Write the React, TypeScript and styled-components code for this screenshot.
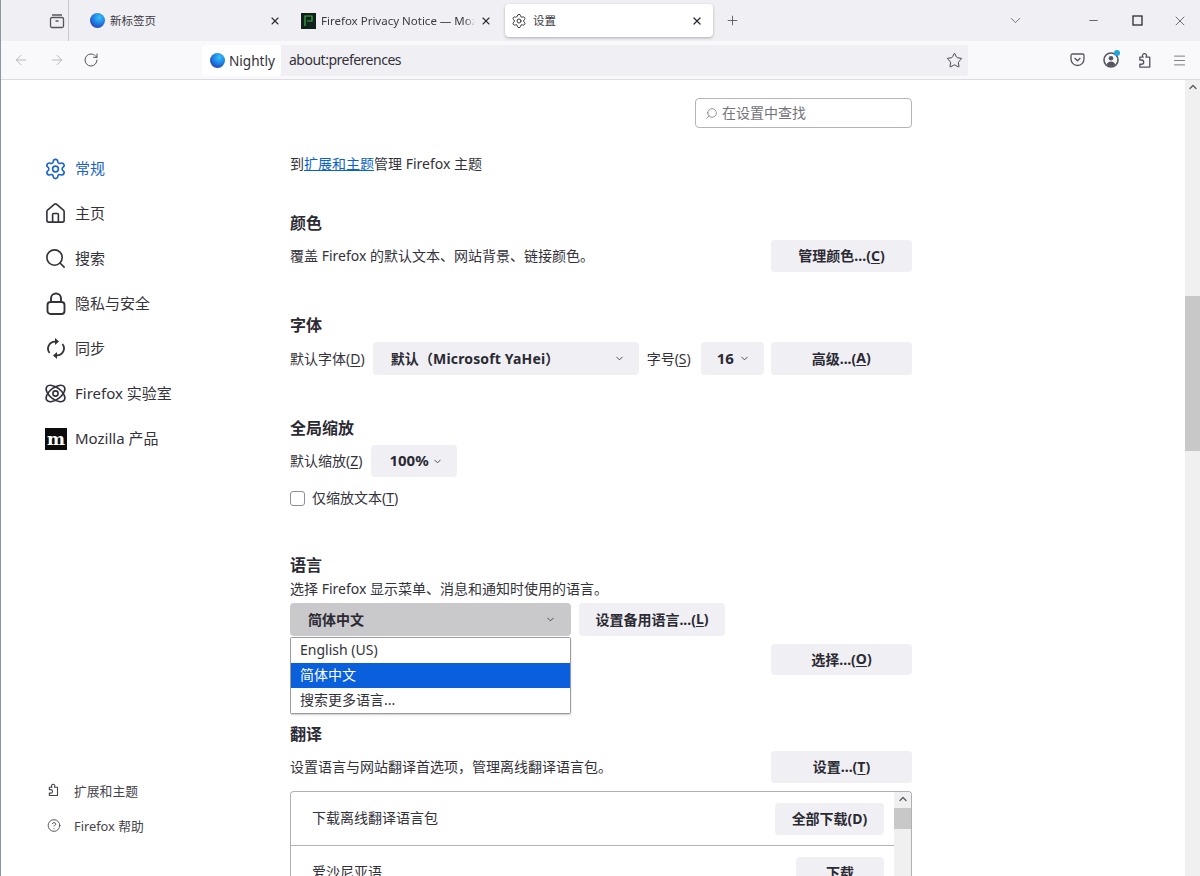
import React from "react";
import styled, { createGlobalStyle } from "styled-components";
import { ArrowLeft, ArrowRight, ChevronDown, ChevronUp, CircleHelp, House, Minus, Plus, RotateCw, Search, Settings, Star, X, Menu as MenuIcon } from "lucide-react";

const FONT = `"Noto Sans", "Noto Sans CJK SC", sans-serif`;

const Global = createGlobalStyle`
  html, body { margin: 0; padding: 0; height: 100%; overflow: hidden; background: #fff; }
  body { font-family: ${FONT}; color: #2b2a33; font-size: 14px; }
  * { box-sizing: border-box; }
`;

const Win = styled.div`
  width: 1200px; height: 876px; display: flex; flex-direction: column; overflow: hidden;
  border-left: 1px solid #8f95a3; background: #fff;
`;
const TabBar = styled.div`
  height: 41px; flex: none; background: #f0f0f4; display: flex; align-items: center; padding-left: 45px;
`;
const ViewBtn = styled.div`
  width: 22px; height: 41px; display: flex; align-items: center; justify-content: center; color: #55555e; flex: none;
`;
const Sep = styled.div`width: 1px; height: 41px; background: #c9c9d0; margin: 0 2px 0 0; flex: none;`;
const Tab = styled.div<{ $w: number; $active?: boolean; $gap: number; $ml?: number }>`
  width: ${p => p.$w}px; height: 33px; flex: none; display: flex; align-items: center; gap: ${p => p.$gap}px;
  margin-left: ${p => p.$ml ?? 0}px; padding: 0 10px 0 ${p => (p.$active ? 6 : 10)}px; font-size: 11.5px; color: #3a3942;
  border-radius: 4px; background: ${p => (p.$active ? "#fff" : "transparent")};
  box-shadow: ${p => (p.$active ? "0 1px 3px rgba(0,0,0,.28)" : "none")};
`;
const TabTitle = styled.span<{ $fade?: boolean }>`
  flex: 1; min-width: 0; white-space: nowrap; overflow: hidden; line-height: 16px;
  ${p => (p.$fade ? "mask-image: linear-gradient(to left, transparent 0, #000 10px);" : "")}
`;
const Close = styled(X)`flex: none; color: #2b2a33;`;
const Globe = styled.span<{ $size: number; $ml?: number }>`
  width: ${p => p.$size}px; height: ${p => p.$size}px; border-radius: 50%; flex: none; margin-left: ${p => p.$ml ?? 0}px;
  background: radial-gradient(circle at 62% 30%, #35c4f5 0, #1f7fe4 45%, #2b3fb0 80%, #2a2a90 100%);
`;
const TermIcon = styled.span`
  width: 15px; height: 16px; background: #10201a; flex: none; display: flex; align-items: center; justify-content: center;
`;
const NewTab = styled.div`width: 20px; margin-left: 9px; display: flex; justify-content: center; color: #55555e;`;
const Spacer = styled.div`flex: 1;`;
const TabList = styled.div`width: 20px; margin-right: 57px; display: flex; justify-content: center; color: #55555e;`;
const WinRow = styled.div`display: flex; align-items: center; padding-right: 9px;`;
const WinCtl = styled.div<{ $mr: number }>`width: 22px; margin-right: ${p => p.$mr}px; display: flex; justify-content: center; color: #2b2a33;`;

const ToolBar = styled.div`
  height: 39px; flex: none; background: #f9f9fb; border-bottom: 1px solid #dcdce0; display: flex; align-items: center;
`;
const NavBtn = styled.div<{ $w: number; $c: string }>`
  width: ${p => p.$w}px; flex: none; display: flex; justify-content: center; color: ${p => p.$c};
`;
const UrlBar = styled.div`
  width: 766px; height: 31px; flex: none; margin-left: 93px; background: #f0f0f4; border-radius: 2px; display: flex; align-items: center; color: #33323a;
`;
const Identity = styled.div`
  width: 79px; height: 31px; background: #fff; display: flex; align-items: center; gap: 4px; padding-left: 8px; border-radius: 3px; font-size: 13.6px; flex: none;
`;
const UrlText = styled.span`margin-left: 8px; flex: 1; font-size: 14px; line-height: 20px; letter-spacing: -0.5px; padding-bottom: 1px;`;
const StarBtn = styled(Star)`margin-right: 5px; color: #44434b;`;
const ToolIcons = styled.div`display: flex; flex: 1; padding-left: 99px; gap: 14px; color: #55555e; align-items: center;`;
const ToolIcon = styled.div`width: 20px; height: 20px; display: flex; justify-content: center; align-items: center; position: relative;`;
const Dot = styled.span`position: absolute; width: 6px; height: 6px; border-radius: 50%; background: #1fa6dc; top: 0; right: 1px;`;

const Body = styled.div`flex: 1; min-height: 0; display: flex; overflow: hidden;`;
const Side = styled.nav`
  width: 289px; flex: none; display: flex; flex-direction: column; padding: 66px 0 41px 43px;
`;
const NavItem = styled.div<{ $active?: boolean }>`
  height: 45px; display: flex; align-items: center; gap: 8px; font-size: 15px; white-space: nowrap;
  color: ${p => (p.$active ? "#1b63c9" : "#33323a")};
`;
const NavLabel = styled.span`padding-bottom: 2px;`;
const NavIcon = styled.span`width: 23px; height: 23px; display: flex; align-items: center; justify-content: center; flex: none;`;
const Mark = styled.span`
  width: 22px; height: 22px; background: #0c0c0d; color: #fff; display: flex; align-items: center; justify-content: center;
  font: 700 17px/20px "DejaVu Serif", serif; letter-spacing: -1px;
`;
const SideBottom = styled.div`margin-top: auto; display: flex; flex-direction: column; gap: 15px;`;
const FootItem = styled.div`
  height: 20px; display: flex; align-items: center; gap: 13px; padding-left: 3px; font-size: 12.8px; color: #44434b; white-space: nowrap;
`;
const FootIcon = styled.span`width: 14px; height: 16px; display: flex; align-items: center; justify-content: center; flex: none;`;

const Main = styled.main`width: 622px; flex: none; padding-top: 18px; overflow: hidden; height: 796px;`;
const SearchRow = styled.div`display: flex; justify-content: flex-end;`;
const SearchBox = styled.div`
  width: 217px; height: 30px; border: 1px solid #b4b4ba; border-radius: 4px; display: flex; align-items: center; gap: 4px;
  padding: 0 0 2px 9px; color: #74737a; font-size: 14px;
`;
const MirrorSearch = styled(Search)`transform: scaleX(-1); margin-top: 2px;`;
const Text = styled.div<{ $top?: number }>`
  margin-top: ${p => p.$top ?? 0}px; line-height: 20px; height: 20px; font-size: 14px; white-space: nowrap; color: #33323a;
`;
const Link = styled.span`color: #0a62c9; text-decoration: underline;`;
const Heading = styled.h2<{ $top: number }>`
  margin: ${p => p.$top}px 0 0; height: 22px; line-height: 22px; font-size: 16px; font-weight: 700; color: #2b2a33;
`;
const Row = styled.div<{ $top: number; $h?: number; $gap?: number; $between?: boolean }>`
  margin-top: ${p => p.$top}px; height: ${p => p.$h ?? 32}px; display: flex; align-items: stretch;
  gap: ${p => p.$gap ?? 0}px; justify-content: ${p => (p.$between ? "space-between" : "flex-start")};
`;
const Label = styled.span<{ $ml?: number }>`
  align-self: center; font-size: 14px; color: #33323a; white-space: nowrap; padding-bottom: 2px; margin-left: ${p => p.$ml ?? 0}px;
`;
const Btn = styled.div<{ $w: number; $h?: number; $ml?: number }>`
  width: ${p => p.$w}px; height: ${p => (p.$h ? `${p.$h}px` : "auto")}; flex: none; background: #f0f0f4; border-radius: 4px; display: flex; align-items: center; justify-content: center;
  font-size: 14px; font-weight: 700; color: #2b2a33; white-space: nowrap; padding-bottom: 2px; margin-left: ${p => p.$ml ?? 0}px;
`;
const SelectBtn = styled.div<{ $w: number; $open?: boolean; $pl: number; $pr: number; $ml?: number; $fs?: number; $ls?: number }>`
  position: relative; width: ${p => p.$w}px; flex: none; border-radius: 4px; display: flex; align-items: center; justify-content: space-between;
  padding: 0 ${p => p.$pr}px 2px ${p => p.$pl}px; background: ${p => (p.$open ? "#c9c9cb" : "#f0f0f4")}; margin-left: ${p => p.$ml ?? 0}px;
  font-size: ${p => p.$fs ?? 14}px; letter-spacing: ${p => p.$ls ?? 0}px; font-weight: 700; color: #2b2a33; white-space: nowrap;
`;
const ChevBox = styled.span`display: flex; margin-top: 2px;`;
const Menu = styled.div`
  position: absolute; left: 0; top: 34px; width: 100%; background: #fff; border: 1px solid #9a9a9f; border-radius: 2px;
  box-shadow: 0 1px 2px rgba(0,0,0,.2); z-index: 5; font-weight: 400;
`;
const Option = styled.div<{ $sel?: boolean }>`
  height: 25px; line-height: 23px; padding-left: 9px; font-size: 14px;
  background: ${p => (p.$sel ? "#0a5fdc" : "#fff")}; color: ${p => (p.$sel ? "#fff" : "#33323a")};
`;
const Check = styled.span`width: 15px; height: 15px; border: 1px solid #8f8f9d; border-radius: 3px; flex: none; align-self: center;`;
const U = styled.span`text-decoration: underline; text-underline-offset: 2px;`;

const Table = styled.div`
  margin-top: 8px; height: 110px; border: 1px solid #b0b0b4; border-radius: 4px 4px 0 0; border-bottom: 0; display: flex; overflow: hidden;
`;
const TableList = styled.div`flex: 1; min-width: 0;`;
const TableRow = styled.div<{ $line?: boolean }>`
  height: 54px; flex: none; display: flex; justify-content: space-between; align-items: flex-start; padding: 11px 10px 0 21px;
  ${p => (p.$line ? "border-bottom: 1px solid #b4b4b8;" : "")}
`;
const RowText = styled.span`margin-top: 5px; font-size: 14px; color: #33323a; line-height: 20px;`;
const Track = styled.div`
  width: 17px; flex: none; background: #f0f0f0; display: flex; flex-direction: column; align-items: center; color: #55555e; padding-top: 1px;
`;
const InnerThumb = styled.div`width: 100%; height: 21px; margin-top: 3px; background: #c8c8c8;`;
const PageBar = styled.div`
  margin-left: 273px; width: 15px; flex: none; background: #f0f0f0; display: flex; flex-direction: column; align-items: center; color: #55555e;
`;
const PageArrow = styled(ChevronUp)`margin-top: 1px; flex: none;`;
const PageThumb = styled.div`width: 15px; height: 155px; margin-top: 203px; background: #c8c8c8; flex: none;`;

const Chev = () => <ChevBox><ChevronDown size={11} strokeWidth={2} color="#3f3f47" /></ChevBox>;

const Puzzle = ({ size = 18 }: { size?: number }) => (
  <svg width={size} height={size} viewBox="0 0 18 18" fill="none" stroke="currentColor" strokeWidth="1.4" strokeLinejoin="round">
    <path d="M3 8.5V5.5h3.4c-.8-1-.9-2.2-.2-3C7 1.5 8.6 1.4 9.5 2.3c.9.9.8 2.200 0 3.200h4V16H3v-3h1.700c1.500 0 2.400-.7 2.400-2.200S6.200 8.500 4.700 8.500z" />
  </svg>
);
const Lock = () => (
  <svg width="20" height="24" viewBox="0 0 20 24" fill="none" stroke="currentColor" strokeWidth="1.9">
    <rect x="1.500" y="10" width="17" height="12" rx="3" />
    <path d="M5 10V6.500a5 5 0 0 1 10 0V10" />
  </svg>
);
const Sync = () => (
  <svg width="20" height="23" viewBox="0 0 20 23" fill="none" stroke="currentColor" strokeWidth="1.8">
    <path d="M3.600 16A7 7 0 0 1 9 4.600" />
    <path d="M16.400 7A7 7 0 0 1 11 18.400" />
    <path d="M9 1l4 3.500L9 8z" fill="currentColor" stroke="none" />
    <path d="M11 15l-4 3.500 4 3.500z" fill="currentColor" stroke="none" />
  </svg>
);
const Lab = () => (
  <svg width="23" height="23" viewBox="0 0 23 23" fill="none" stroke="currentColor" strokeWidth="1.6">
    <ellipse cx="11.500" cy="11.500" rx="11" ry="5.800" transform="rotate(38 11.500 11.500)" />
    <ellipse cx="11.500" cy="11.500" rx="11" ry="5.800" transform="rotate(-38 11.500 11.500)" />
    <circle cx="11.500" cy="11.500" r="2.600" />
  </svg>
);
const ViewIcon = () => (
  <svg width="16" height="16" viewBox="0 0 16 16" fill="none" stroke="currentColor" strokeWidth="1.300">
    <rect x="1.500" y="4.500" width="13" height="10" rx="1.500" />
    <path d="M3 2h10M6.500 8h3" />
  </svg>
);
const Pocket = () => (
  <svg width="15" height="14" viewBox="0 0 15 14" fill="none" stroke="currentColor" strokeWidth="1.300">
    <path d="M1 2.500C1 1.600 1.600 1 2.500 1h10c.9 0 1.500.6 1.500 1.500V6a6.500 6.500 0 0 1-13 0z" />
    <path d="M4.600 5l2.900 2.800L10.400 5" />
  </svg>
);
const Account = () => (
  <svg width="16" height="16" viewBox="0 0 16 16">
    <circle cx="8" cy="8" r="7" fill="none" stroke="currentColor" strokeWidth="1.600" />
    <circle cx="8" cy="6.300" r="2.300" fill="currentColor" />
    <path d="M3.600 12.600c.8-2 2.400-3 4.400-3s3.600 1 4.400 3A6 6 0 0 1 3.600 12.600z" fill="currentColor" />
  </svg>
);
const Term = () => (
  <svg width="9" height="11" viewBox="0 0 9 11" fill="none" stroke="#3fae4a" strokeWidth="1.200"><path d="M1 11V1h7v5H3" /></svg>
);
const Maximize = () => (
  <svg width="11" height="11" viewBox="0 0 11 11" fill="none" stroke="currentColor" strokeWidth="1.300"><rect x="1" y="1" width="9" height="9" /></svg>
);

export default function App() {
  return (
    <>
      <Global />
      <Win>
        <TabBar>
          <ViewBtn><ViewIcon /></ViewBtn>
          <Sep />
          <Tab $w={219} $gap={5} $ml={1}>
            <Globe $size={15} $ml={8} />
            <TabTitle>新标签页</TabTitle>
            <Close size={12} strokeWidth={2.2} />
          </Tab>
          <Tab $w={211} $gap={5}>
            <TermIcon><Term /></TermIcon>
            <TabTitle $fade>Firefox Privacy Notice — Mozilla</TabTitle>
            <Close size={12} strokeWidth={2.2} />
          </Tab>
          <Tab $w={208} $gap={6} $active $ml={3}>
            <Settings size={16} strokeWidth={1.5} />
            <TabTitle>设置</TabTitle>
            <Close size={12} strokeWidth={2.6} />
          </Tab>
          <NewTab><Plus size={15} strokeWidth={1.4} /></NewTab>
          <Spacer />
          <TabList><ChevronDown size={17} strokeWidth={1.1} /></TabList>
          <WinRow>
            <WinCtl $mr={22}><Minus size={13} strokeWidth={1.3} /></WinCtl>
            <WinCtl $mr={21}><Maximize /></WinCtl>
            <WinCtl $mr={0}><X size={16} strokeWidth={1} /></WinCtl>
          </WinRow>
        </TabBar>
        <ToolBar>
          <NavBtn $w={40} $c="#b3b3b8"><ArrowLeft size={16} strokeWidth={1.4} /></NavBtn>
          <NavBtn $w={32} $c="#b3b3b8"><ArrowRight size={16} strokeWidth={1.4} /></NavBtn>
          <NavBtn $w={36} $c="#55555e"><RotateCw size={16} strokeWidth={1.5} /></NavBtn>
          <UrlBar>
            <Identity><Globe $size={15} />Nightly</Identity>
            <UrlText>about:preferences</UrlText>
            <StarBtn size={17} strokeWidth={1.4} />
          </UrlBar>
          <ToolIcons>
            <ToolIcon><Pocket /></ToolIcon>
            <ToolIcon><Account /><Dot /></ToolIcon>
            <ToolIcon><Puzzle size={17} /></ToolIcon>
            <ToolIcon><MenuIcon size={15} strokeWidth={1.2} /></ToolIcon>
          </ToolIcons>
        </ToolBar>
        <Body>
          <Side>
            <NavItem $active><NavIcon><Settings size={24} strokeWidth={1.7} /></NavIcon><NavLabel>常规</NavLabel></NavItem>
            <NavItem><NavIcon><House size={23} strokeWidth={1.7} /></NavIcon><NavLabel>主页</NavLabel></NavItem>
            <NavItem><NavIcon><Search size={23} strokeWidth={1.7} /></NavIcon><NavLabel>搜索</NavLabel></NavItem>
            <NavItem><NavIcon><Lock /></NavIcon><NavLabel>隐私与安全</NavLabel></NavItem>
            <NavItem><NavIcon><Sync /></NavIcon><NavLabel>同步</NavLabel></NavItem>
            <NavItem><NavIcon><Lab /></NavIcon><NavLabel>Firefox 实验室</NavLabel></NavItem>
            <NavItem><NavIcon><Mark>m</Mark></NavIcon><NavLabel>Mozilla 产品</NavLabel></NavItem>
            <SideBottom>
              <FootItem><FootIcon><Puzzle size={16} /></FootIcon>扩展和主题</FootItem>
              <FootItem><FootIcon><CircleHelp size={15} strokeWidth={1.5} /></FootIcon>Firefox 帮助</FootItem>
            </SideBottom>
          </Side>
          <Main>
            <SearchRow>
              <SearchBox><MirrorSearch size={13} strokeWidth={1.4} />在设置中查找</SearchBox>
            </SearchRow>
            <Text $top={26}>到<Link>扩展和主题</Link>管理 Firefox 主题</Text>
            <Heading $top={38}>颜色</Heading>
            <Row $top={6} $between>
              <Label>覆盖 Firefox 的默认文本、网站背景、链接颜色。</Label>
              <Btn $w={141}>管理颜色...(<U>C</U>)</Btn>
            </Row>
            <Heading $top={42}>字体</Heading>
            <Row $top={6} $h={33}>
              <Label>默认字体(<U>D</U>)</Label>
              <SelectBtn $w={266} $pl={18} $pr={14} $ml={8} $ls={0.15}>默认（Microsoft YaHei）<Chev /></SelectBtn>
              <Label $ml={8}>字号(<U>S</U>)</Label>
              <SelectBtn $w={63} $pl={16} $pr={14} $ml={10} $fs={15}>16<Chev /></SelectBtn>
              <Btn $w={141} $ml={7}>高级...(<U>A</U>)</Btn>
            </Row>
            <Heading $top={42}>全局缩放</Heading>
            <Row $top={6}>
              <Label>默认缩放(<U>Z</U>)</Label>
              <SelectBtn $w={86} $pl={18} $pr={14} $ml={9} $fs={15}>100%<Chev /></SelectBtn>
            </Row>
            <Row $top={11} $h={20} $gap={7}>
              <Check />
              <Label>仅缩放文本(<U>T</U>)</Label>
            </Row>
            <Heading $top={46}>语言</Heading>
            <Text $top={3}>选择 Firefox 显示菜单、消息和通知时使用的语言。</Text>
            <Row $top={4} $h={33} $gap={8}>
              <SelectBtn $w={281} $open $pl={18} $pr={15}>
                简体中文<Chev />
                <Menu>
                  <Option>English (US)</Option>
                  <Option $sel>简体中文</Option>
                  <Option>搜索更多语言...</Option>
                </Menu>
              </SelectBtn>
              <Btn $w={146}>设置备用语言...(<U>L</U>)</Btn>
            </Row>
            <Row $top={8} $h={31} $between>
              <span />
              <Btn $w={141}>选择...(<U>O</U>)</Btn>
            </Row>
            <Heading $top={48}>翻译</Heading>
            <Row $top={6} $between>
              <Label>设置语言与网站翻译首选项，管理离线翻译语言包。</Label>
              <Btn $w={141}>设置...(<U>T</U>)</Btn>
            </Row>
            <Table>
              <TableList>
                <TableRow $line>
                  <RowText>下载离线翻译语言包</RowText>
                  <Btn $w={109} $h={32}>全部下载(D)</Btn>
                </TableRow>
                <TableRow>
                  <RowText>爱沙尼亚语</RowText>
                  <Btn $w={88} $h={32}>下载</Btn>
                </TableRow>
              </TableList>
              <Track>
                <ChevronUp size={12} strokeWidth={2.4} />
                <InnerThumb />
              </Track>
            </Table>
          </Main>
          <PageBar>
            <PageArrow size={12} strokeWidth={2.4} />
            <PageThumb />
          </PageBar>
        </Body>
      </Win>
    </>
  );
}
